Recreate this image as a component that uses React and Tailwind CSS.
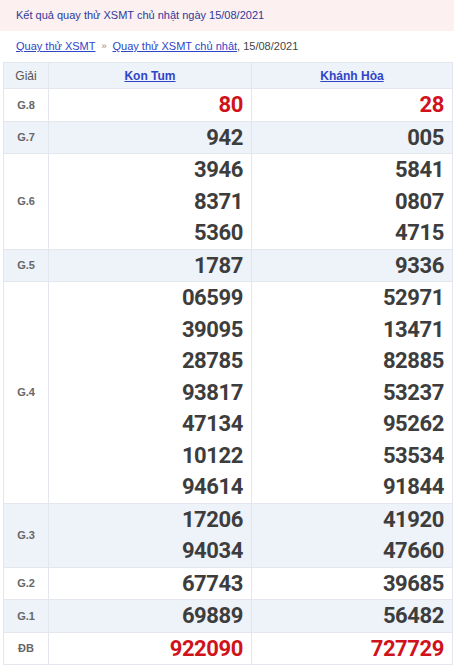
const KON_TUM = 'Kon Tum'
const KHANH_HOA = 'Khánh Hòa'

const ROWS = [
  { label: 'G.8', a: ['80'], b: ['28'], red: true },
  { label: 'G.7', a: ['942'], b: ['005'], alt: true },
  { label: 'G.6', a: ['3946', '8371', '5360'], b: ['5841', '0807', '4715'] },
  { label: 'G.5', a: ['1787'], b: ['9336'], alt: true },
  {
    label: 'G.4',
    a: ['06599', '39095', '28785', '93817', '47134', '10122', '94614'],
    b: ['52971', '13471', '82885', '53237', '95262', '53534', '91844'],
  },
  { label: 'G.3', a: ['17206', '94034'], b: ['41920', '47660'], alt: true },
  { label: 'G.2', a: ['67743'], b: ['39685'] },
  { label: 'G.1', a: ['69889'], b: ['56482'], alt: true },
  { label: 'ĐB', a: ['922090'], b: ['727729'], red: true },
]

function Numbers({ list, red }) {
  return (
    <td className="border border-[#e3e6ec] px-2 py-0 text-right align-middle">
      {list.map(n => (
        <div
          key={n}
          className={`h-[31.5px] leading-[31.5px] text-[22px] font-bold tracking-[-0.4px] font-['Roboto',sans-serif] ${red ? 'text-[#d0121b]' : 'text-[#3d3d3d]'}`}
        >
          {n}
        </div>
      ))}
    </td>
  )
}

export default function App() {
  return (
    <div className="w-[454px] min-h-[667px] bg-white font-['Liberation_Sans',Arial,sans-serif]">
      <div className="h-[31px] bg-[#fcf0f0] px-4 flex items-center text-[11px] text-[#2d3a9c]">
        Kết quả quay thử XSMT chủ nhật ngày 15/08/2021
      </div>
      <div className="h-[31px] px-4 flex items-center text-[11px] text-[#444]">
        <a href="#" className="text-[#2f45c8] underline">Quay thử XSMT</a>
        <span className="mx-[6px] text-[9px] text-[#888]">»</span>
        <a href="#" className="text-[#2f45c8] underline">Quay thử XSMT chủ nhật</a>
        <span>, 15/08/2021</span>
      </div>
      <div className="px-[3px]">
        <table className="w-[449px] border-collapse table-fixed">
          <colgroup>
            <col className="w-[45px]" />
            <col className="w-[203px]" />
            <col className="w-[201px]" />
          </colgroup>
          <thead>
            <tr className="h-[26px] bg-[#eef2f9]">
              <th className="border border-[#e3e6ec] text-[12px] font-normal text-[#555] text-center">Giải</th>
              <th className="border border-[#e3e6ec] text-[12px] font-bold text-center">
                <a href="#" className="text-[#2f45c8] underline">{KON_TUM}</a>
              </th>
              <th className="border border-[#e3e6ec] text-[12px] font-bold text-center">
                <a href="#" className="text-[#2f45c8] underline">{KHANH_HOA}</a>
              </th>
            </tr>
          </thead>
          <tbody>
            {ROWS.map(r => (
              <tr key={r.label} className={r.alt ? 'bg-[#eef2f9]' : 'bg-white'}>
                <td className="border border-[#e3e6ec] text-[11px] font-bold text-[#666] text-center align-middle">
                  {r.label}
                </td>
                <Numbers list={r.a} red={r.red} />
                <Numbers list={r.b} red={r.red} />
              </tr>
            ))}
          </tbody>
        </table>
      </div>
    </div>
  )
}
